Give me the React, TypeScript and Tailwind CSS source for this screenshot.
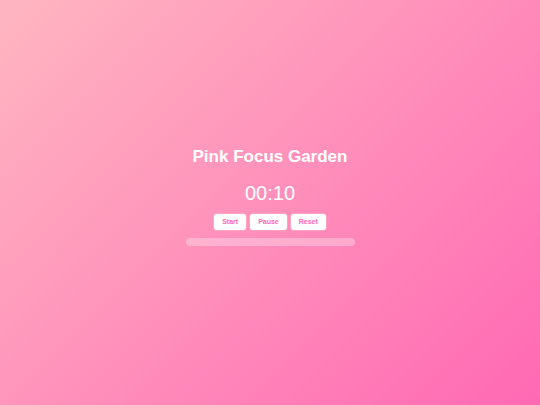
export default function App() {
  return (
    <div
      className="w-full h-[405px] flex flex-col items-center justify-center bg-[linear-gradient(135deg,#ffb6c1,#ff69b4)] pb-[12px]"
      style={{ fontFamily: '"Liberation Sans", Arial, sans-serif' }}
    >
      <h1 className="text-[17px] leading-[20px] font-bold text-white">Pink Focus Garden</h1>
      <div className="mt-[15px] text-[20px] leading-[23px] text-white">00:10</div>
      <div className="mt-[9px] flex gap-[4px]">
        <button className="h-[16px] px-[8px] flex items-center bg-white rounded-[3px] text-[7px] leading-[8px] font-bold text-[#ff69b4] shadow-[0_0_0_1px_rgba(255,182,193,0.6)]">Start</button>
        <button className="h-[16px] px-[8px] flex items-center bg-white rounded-[3px] text-[7px] leading-[8px] font-bold text-[#ff69b4] shadow-[0_0_0_1px_rgba(255,182,193,0.6)]">Pause</button>
        <button className="h-[16px] px-[8px] flex items-center bg-white rounded-[3px] text-[7px] leading-[8px] font-bold text-[#ff69b4] shadow-[0_0_0_1px_rgba(255,182,193,0.6)]">Reset</button>
      </div>
      <div className="mt-[8px] w-[169px] h-[8px] rounded-full bg-white/30"></div>
    </div>
  );
}
